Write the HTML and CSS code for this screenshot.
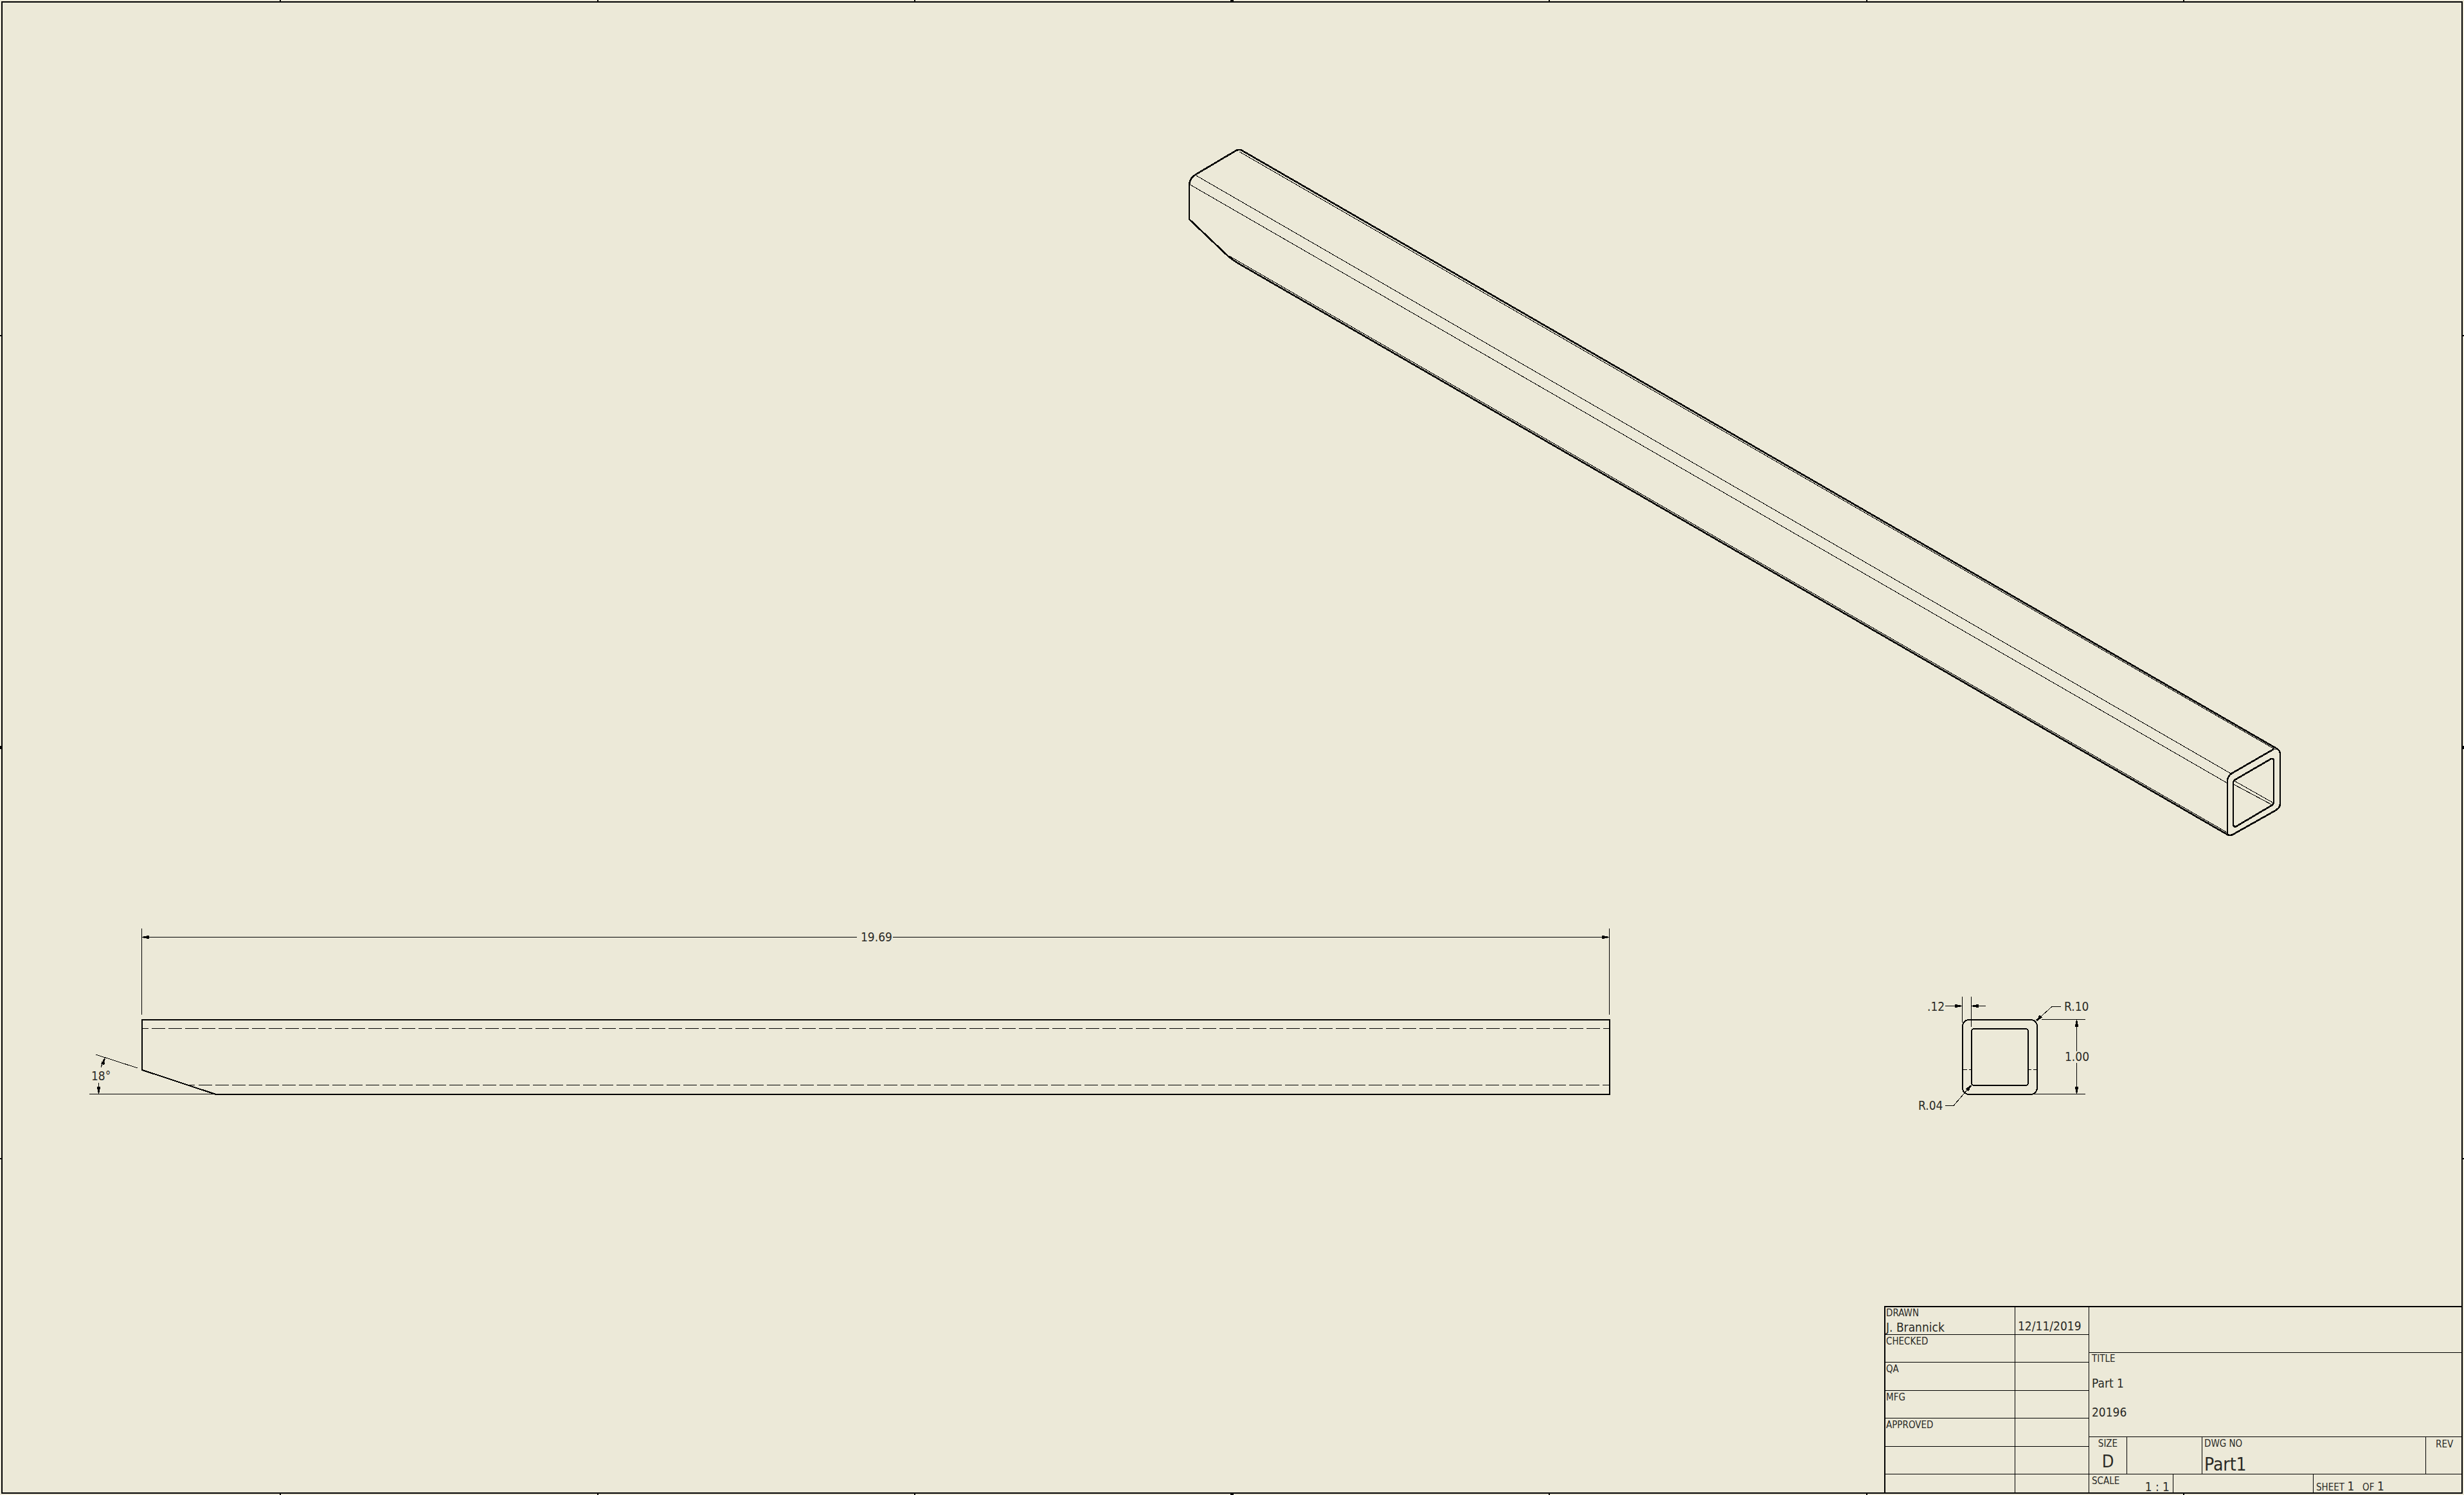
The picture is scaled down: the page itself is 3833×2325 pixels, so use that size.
FILE: index.html
```html
<!DOCTYPE html>
<html lang="en">
<head>
  <meta charset="UTF-8" />
  <title>Part1 - Drawing Sheet</title>
  <link rel="stylesheet" href="styles.css" />
</head>
<body>

<div class="sheet">

  <!-- free canvas: coordinates are sheet pixels -->
  <svg class="drawing" width="3833" height="2325" viewBox="0 0 3833 2325">
    <defs>
      <polygon id="arrow" class="head" points="-11,-2.5 -7,-2.5 -7,-1.5 -2,-1.5 -2,1.5 -7,1.5 -7,2.5 -11,2.5" />
    </defs>

    <!-- sheet border and zone ticks -->
    <rect class="thick" x="3" y="3" width="3827" height="2319" />
    <path class="thick" d="M436 0V2M930 0V2M1423 0V2M2410 0V2M2904 0V2M3397 0V2" />
    <path class="thick" d="M436 2323V2325M930 2323V2325M1423 2323V2325M2410 2323V2325M2904 2323V2325M3397 2323V2325" />
    <path class="thick" d="M0 522H2M0 1802H2M3831 522H3833M3831 1802H3833" />
    <rect class="head" x="1914" y="0" width="5" height="2" />
    <rect class="head" x="1914" y="2323" width="5" height="2" />
    <rect class="head" x="0" y="1160" width="2" height="5" />
    <rect class="head" x="3831" y="1160" width="2" height="5" />

    <!-- iso view -->
    <path class="thick iso" d="M1850 341V287Q1851 277 1859 272L1923 234Q1928 232 1932 234L3543 1165Q3547 1168 3547 1172V1250Q3547 1257 3537 1262L3473 1298Q3469 1300 3465 1298L1927 410Q1920 406 1910 398Z" />
    <path class="thick iso" d="M3465 1298V1213Q3466 1206 3473 1202L3537 1165" />
    <path class="thick iso" d="M3474 1283V1218Q3474 1214 3478 1212L3533 1180Q3537 1179 3537 1183V1247Q3537 1251 3533 1253L3479 1285Q3475 1287 3474 1283Z" />
    <path class="thin" d="M1928 236L3540 1166M1859 272L3472 1204M1851 287L3465 1218M1912 398L3465 1295M3475 1214L3537 1249M3475 1220L3535 1252" />

    <!-- front view -->
    <path class="thick" d="M221 1664V1586H2504V1702H336Z" />
    <path class="thin hidden-top" d="M221 1599.5H2503" />
    <path class="thin hidden" d="M293 1687.5H303M309 1687.5H2503" />

    <!-- 19.69 -->
    <path class="thin" d="M220.5 1444V1578M2503.5 1444V1578M221 1457.5H1333M1389 1457.5H2503" />
    <use href="#arrow" transform="translate(221 1457.5) rotate(180)" />
    <use href="#arrow" transform="translate(2503 1457.5)" />
    <text class="dim" x="1339" y="1464">19.69</text>

    <!-- 18 deg -->
    <path class="thin" d="M149 1640L214 1661M139 1701.5H336M163 1645L157 1660M154 1684L153 1701" />
    <use href="#arrow" transform="translate(163 1645) rotate(-72)" />
    <use href="#arrow" transform="translate(153 1701) rotate(90)" />
    <text class="dim" x="142" y="1680">18°</text>

    <!-- section view -->
    <rect class="thick" x="3053" y="1586" width="116" height="116" rx="10" />
    <rect class="thick" x="3067" y="1600" width="88" height="88" rx="4" />
    <path class="thin" d="M3053 1663.5H3060M3063 1663.5H3067M3155 1663.5H3160M3163 1663.5H3169" />

    <path class="thin" d="M3052.5 1550V1590M3066.5 1550V1597M3026 1564.5H3052M3067 1564.5H3089" />
    <use href="#arrow" transform="translate(3052 1564.5)" />
    <use href="#arrow" transform="translate(3067 1564.5) rotate(180)" />
    <text class="dim" x="2998" y="1572">.12</text>

    <path class="thin" d="M3206 1565.5H3192L3167 1588" />
    <use href="#arrow" transform="translate(3167 1588) rotate(137)" />
    <text class="dim" x="3211" y="1572">R.10</text>

    <path class="thin" d="M3176 1585.5H3244M3164 1701.5H3244M3230.5 1586V1635M3230.5 1653V1701" />
    <use href="#arrow" transform="translate(3230.5 1586) rotate(-90)" />
    <use href="#arrow" transform="translate(3230.5 1701) rotate(90)" />
    <text class="dim" x="3212" y="1650">1.00</text>

    <path class="thin" d="M3026 1719.5H3039L3067 1687" />
    <use href="#arrow" transform="translate(3067 1687) rotate(-49)" />
    <text class="dim" x="2984" y="1726">R.04</text>
  </svg>

  <!-- title block -->
  <div class="title-block">
    <div class="sign-off">
      <div class="cell"><span class="label">DRAWN</span><span class="value name">J. Brannick</span></div>
      <div class="cell date">12/11/2019</div>
      <div class="cell"><span class="label">CHECKED</span></div>
      <div class="cell"></div>
      <div class="cell"><span class="label">QA</span></div>
      <div class="cell"></div>
      <div class="cell"><span class="label">MFG</span></div>
      <div class="cell"></div>
      <div class="cell"><span class="label">APPROVED</span></div>
      <div class="cell"></div>
      <div class="cell"></div>
      <div class="cell"></div>
      <div class="cell"></div>
      <div class="cell"></div>
    </div>

    <div class="details">
      <div class="company"></div>
      <div class="title-cell">
        <span class="label">TITLE</span>
        <span class="value part-title">Part 1</span>
        <span class="value part-number">20196</span>
      </div>
      <div class="size-row">
        <div class="size-cell"><span class="label">SIZE</span><span class="big">D</span></div>
        <div class="blank-cell"></div>
        <div class="dwg-cell"><span class="label">DWG NO</span><span class="big">Part1</span></div>
        <div class="rev-cell"><span class="label">REV</span></div>
      </div>
      <div class="scale-row">
        <div class="scale-cell"><span class="label">SCALE</span><span class="value scale-value">1 : 1</span></div>
        <div class="blank-cell"></div>
        <div class="sheet-cell"><span class="label">SHEET</span> <span class="value">1</span> <span class="label of">OF</span> <span class="value">1</span></div>
      </div>
    </div>
  </div>

</div>

</body>
</html>
```

FILE: styles.css
```css
:root {
  --paper: #ece9d8;
  --ink: #000000;
  --text: #2a2a26;
  --font: "DejaVu Sans Condensed", "Noto Sans", sans-serif;
}

* {
  margin: 0;
  padding: 0;
  box-sizing: border-box;
}

body {
  background-color: var(--paper);
  overflow: hidden;
}

.sheet {
  position: relative;
  width: 3833px;
  height: 2325px;
}

.drawing {
  display: block;
}

/* Drawing strokes */
.thick,
.thin {
  fill: none;
  stroke: var(--ink);
  shape-rendering: crispEdges;
}

.thick {
  stroke-width: 2;
}

.iso {
  stroke-width: 2.6;
}

.thin {
  stroke-width: 1;
}

.hidden {
  stroke-dasharray: 21 5;
}

.hidden-top {
  stroke-dasharray: 21 4.95;
  stroke-dashoffset: 11;
}

.head {
  fill: var(--ink);
  shape-rendering: crispEdges;
}

.dim {
  font-family: var(--font);
  font-size: 19px;
  fill: var(--text);
}

/* Title block */
.title-block {
  position: absolute;
  left: 2931px;
  top: 2031px;
  width: 900px;
  height: 292px;
  display: flex;
  border-top: 2px solid var(--ink);
  border-left: 2px solid var(--ink);
  font-family: var(--font);
  color: var(--text);
}

.sign-off {
  width: 317px;
  flex: none;
  display: grid;
  grid-template-columns: 202px 114px;
  grid-template-rows: 43px 43px 44px 43px 44px 43px 30px;
  border-right: 1px solid var(--ink);
}

.sign-off .cell {
  display: flex;
  flex-direction: column;
  padding: 1px 0 0 1px;
  border-bottom: 1px solid var(--ink);
  border-right: 1px solid var(--ink);
  line-height: 18px;
}

.sign-off .cell:first-child {
  padding-top: 0;
}

.sign-off .cell:nth-child(2n) {
  border-right: none;
}

.sign-off .cell:nth-last-child(-n+2) {
  border-bottom: none;
}

.label {
  font-size: 15px;
  line-height: 18px;
}

.value {
  font-size: 19px;
  line-height: 22px;
}

.name {
  margin-top: 2px;
}

.sign-off .date {
  font-size: 19px;
  padding: 20px 0 0 4px;
}

.details {
  flex: 1;
  display: flex;
  flex-direction: column;
}

.company {
  height: 71px;
  flex: none;
  border-bottom: 1px solid var(--ink);
}

.title-cell {
  height: 131px;
  flex: none;
  display: flex;
  flex-direction: column;
  padding-left: 4px;
  border-bottom: 1px solid var(--ink);
}

.part-title {
  margin-top: 18px;
}

.part-number {
  margin-top: 23px;
}

.size-row {
  height: 58px;
  flex: none;
  display: flex;
  border-bottom: 1px solid var(--ink);
}

.size-cell {
  width: 59px;
  flex: none;
  display: flex;
  flex-direction: column;
  align-items: center;
  padding-top: 1px;
  border-right: 1px solid var(--ink);
}

.size-cell .big {
  font-size: 27px;
  margin-top: 3px;
}

.size-row .blank-cell {
  width: 117px;
  flex: none;
  border-right: 1px solid var(--ink);
}

.dwg-cell {
  width: 348px;
  flex: none;
  display: flex;
  flex-direction: column;
  padding: 1px 0 0 3px;
  border-right: 1px solid var(--ink);
}

.rev-cell {
  flex: 1;
  padding: 1px 0 0 15px;
}

.big {
  font-size: 28px;
  line-height: 32px;
}

.dwg-cell .big {
  margin-top: 8px;
}

.scale-row {
  flex: 1;
  display: flex;
}

.scale-cell {
  width: 131px;
  flex: none;
  position: relative;
  padding-left: 4px;
  border-right: 1px solid var(--ink);
}

.scale-value {
  position: absolute;
  right: 5px;
  bottom: 0;
}

.scale-row .blank-cell {
  width: 218px;
  flex: none;
  border-right: 1px solid var(--ink);
}

.sheet-cell {
  flex: 1;
  padding: 7px 0 0 4px;
  white-space: pre;
}

.of {
  margin-left: 8px;
}
```
